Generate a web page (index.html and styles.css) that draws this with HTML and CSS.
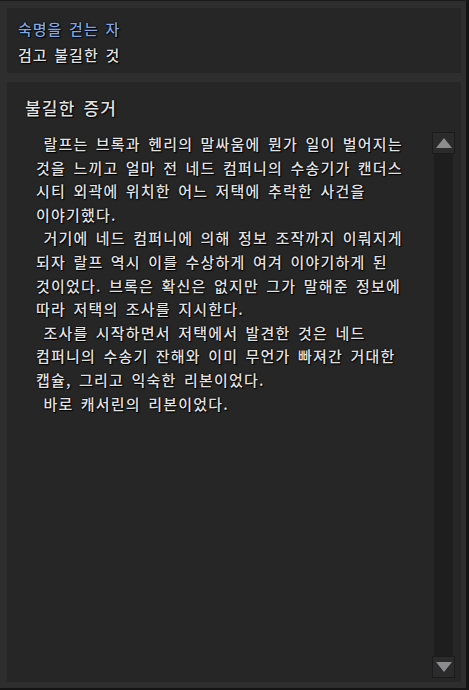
FILE: index.html
```html
<!DOCTYPE html>
<html lang="ko">
<head>
<meta charset="utf-8">
<link rel="stylesheet" href="styles.css">
</head>
<body>
<div class="frame">
  <section class="panel header-panel">
    <div class="quest-title">숙명을 걷는 자</div>
    <div class="quest-sub">검고 불길한 것</div>
  </section>
  <section class="panel detail-panel">
    <h2 class="detail-title">불길한 증거</h2>
    <div class="detail-body">
      <p class="detail-text"> 랄프는 브록과 헨리의 말싸움에 뭔가 일이 벌어지는
것을 느끼고 얼마 전 네드 컴퍼니의 수송기가 캔더스
시티 외곽에 위치한 어느 저택에 추락한 사건을
이야기했다.
 거기에 네드 컴퍼니에 의해 정보 조작까지 이뤄지게
되자 랄프 역시 이를 수상하게 여겨 이야기하게 된
것이었다. 브록은 확신은 없지만 그가 말해준 정보에
따라 저택의 조사를 지시한다.
 조사를 시작하면서 저택에서 발견한 것은 네드
컴퍼니의 수송기 잔해와 이미 무언가 빠져간 거대한
캡슐, 그리고 익숙한 리본이었다.
 바로 캐서린의 리본이었다.</p>
      <div class="scrollbar">
        <div class="sb-btn"><span class="tri up"></span></div>
        <div class="sb-track"></div>
        <div class="sb-btn"><span class="tri down"></span></div>
      </div>
    </div>
  </section>
</div>
</body>
</html>
```
FILE: styles.css
```css
* { box-sizing: border-box; }
html, body {
  margin: 0;
  padding: 0;
  background: #2e2e2e;
}
body {
  width: 469px;
  height: 690px;
  overflow: hidden;
  font-family: "Noto Sans CJK KR", "Noto Sans", sans-serif;
  color: #e2e2e2;
}
.frame {
  width: 469px;
  height: 690px;
  display: flex;
  flex-direction: column;
  gap: 9px;
  padding: 7px 5px 6px 7px;
  border-top: 1px solid #1a1a1a;
  border-right: 3px solid #141414;
  border-bottom: 2px solid #141414;
  background: #2e2e2e;
}
.panel {
  background: #262626;
}
.header-panel {
  height: 65px;
  padding: 10px 0 0 11px;
}
.quest-title,
.quest-sub {
  font-size: 15px;
  font-weight: 500;
  letter-spacing: 1px;
  word-spacing: 1.5px;
  line-height: 22px;
  height: 22px;
  text-shadow: 0 0 2px #000, 0 0 1px #000, 1px 1px 1px #000;
}
.quest-title {
  color: #7fa8e2;
}
.quest-sub {
  color: #e2e2e2;
  margin-top: 4px;
}
.detail-panel {
  flex: 1;
  display: flex;
  flex-direction: column;
  padding: 14px 6px 4px 18px;
}
.detail-title {
  margin: 0;
  font-weight: 500;
  font-size: 17px;
  letter-spacing: 1.2px;
  word-spacing: 2px;
  line-height: 24px;
  padding-left: 0;
  color: #e2e2e2;
  text-shadow: 0 0 2px #000, 0 0 1px #000, 1px 1px 1px #000;
}
.detail-body {
  flex: 1;
  display: flex;
  gap: 8px;
  margin-top: 12px;
  min-height: 0;
}
.detail-text {
  flex: 1;
  margin: 0;
  padding: 0 0 0 11px;
  white-space: pre;
  font-size: 15px;
  font-weight: 500;
  line-height: 23.6px;
  letter-spacing: 1.2px;
  word-spacing: 2px;
  color: #e2e2e2;
  text-shadow: 0 0 2px #000, 0 0 1px #000, 1px 1px 1px #000;
}
.scrollbar {
  width: 23px;
  display: flex;
  flex-direction: column;
}
.sb-btn {
  height: 22px;
  background: #2b2b2b;
  border: 1px solid #1b1b1b;
  display: flex;
  align-items: center;
  justify-content: center;
}
.sb-track {
  flex: 1;
  margin: 0 2px;
  background: #1e1e1e;
}
.tri {
  width: 0;
  height: 0;
  border-left: 8px solid transparent;
  border-right: 8px solid transparent;
}
.tri.up { border-bottom: 10px solid #8c8c8e; }
.tri.down { border-top: 10px solid #8c8c8e; }
```
